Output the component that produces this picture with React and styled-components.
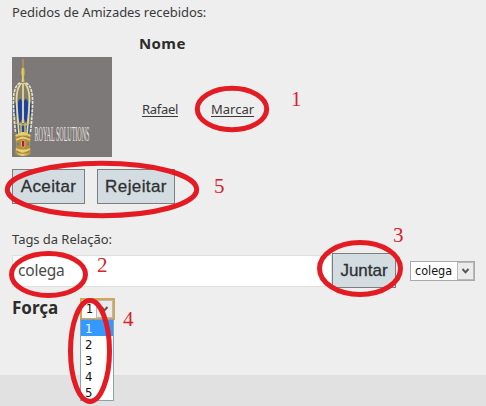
import React from "react";
import styled, { createGlobalStyle } from "styled-components";

const Global = createGlobalStyle`
  * { box-sizing: border-box; }
  body { margin: 0; background: #eeeeee; color: #3a3a3a; font-family: "Open Sans", "Noto Sans", sans-serif; }
`;
const Page = styled.div`
  position: relative;
  width: 486px;
  height: 406px;
  overflow: hidden;
  display: flex;
  flex-direction: column;
  background: #eeeeee;
`;
const Content = styled.main`
  height: 375px;
  padding: 2px 0 0 12px;
  display: flex;
  flex-direction: column;
`;
const Label = styled.div`
  height: 20px;
  font: 13px/20px "Noto Sans", sans-serif;
  letter-spacing: -0.05px;
  white-space: nowrap;
`;
const NameHeading = styled.div`
  height: 35px;
  padding: 10px 0 0 127px;
  color: #2c2c2c;
  font: bold 15px/22px "Noto Sans", sans-serif;
  letter-spacing: 0.4px;
`;
const RequestRow = styled.div`
  display: grid;
  grid-template-columns: 130px 69px 60px;
  height: 100px;
`;
const PersonLink = styled.a`
  margin-top: 42px;
  font: 13px/20px "Noto Sans", sans-serif;
  letter-spacing: ${(p) => p.$spacing || 0}px;
  text-decoration: underline;
  text-underline-offset: 2px;
  justify-self: start;
`;
const Logo = styled.svg`
  display: block;
  width: 100px;
  height: 100px;
`;
const Actions = styled.div`
  display: flex;
  gap: 12px;
  margin-top: 12px;
`;
const Button = styled.button`
  width: ${(p) => p.$width}px;
  height: 35px;
  padding: 0;
  border: 1px solid #7b7f82;
  border-radius: 0;
  background: #d3dce1;
  color: #2e3032;
  font: 17px/32px "Liberation Sans", sans-serif;
  -webkit-text-stroke: 0.3px #2e3032;
  letter-spacing: ${(p) => p.$spacing || 0}px;
  flex: none;
`;
const TagLabel = styled(Label)`
  margin-top: 25px;
`;
const TagRow = styled.div`
  display: flex;
  height: 35px;
  margin-top: 4px;
`;
const TagInput = styled.input`
  width: 320px;
  height: 32px;
  margin-top: 2px;
  padding: 0 5px 2px;
  border: 1px solid #e0e0e0;
  border-radius: 0;
  background: #fff;
  color: #4a4a4a;
  font: 15.5px "Noto Sans", sans-serif;
  letter-spacing: -0.2px;
  outline: none;
`;
const SelectBox = styled.div`
  display: flex;
  width: ${(p) => p.$width}px;
  height: ${(p) => p.$height}px;
  border: ${(p) => (p.$open ? "2px solid #d2a754" : "1px solid #a9a9a9")};
  background: #fff;
  color: #111;
  font: 12.5px/18px "DejaVu Sans Condensed", "DejaVu Sans", sans-serif;
  font-stretch: condensed;
`;
const TagSelect = styled(SelectBox)`
  margin: 8px 0 0 14px;
`;
const SelectValue = styled.span`
  flex: 1;
  padding-left: 4px;
`;
const Arrow = styled.span`
  display: grid;
  place-items: center;
  width: 17px;
  border: 1px solid #b9b9b9;
  background: #ebebeb;
`;
const StrengthRow = styled.div`
  display: flex;
  margin-top: 10px;
  height: 22px;
`;
const StrengthLabel = styled.div`
  width: 68px;
  color: #2c2c2c;
  font: bold 17px/20px "Noto Sans", sans-serif;
`;
const StrengthPicker = styled.div`
  position: relative;
`;
const Options = styled.ul`
  position: absolute;
  z-index: 1;
  top: 21px;
  left: 0;
  width: 34px;
  margin: 0;
  padding: 0;
  list-style: none;
  border: 1px solid #8aa3b5;
  background: #fff;
`;
const Option = styled.li`
  height: 16px;
  padding-left: 4px;
  font: 13px/17px "DejaVu Sans Condensed", "DejaVu Sans", sans-serif;
  font-stretch: condensed;
  color: ${(p) => (p.$selected ? "#fff" : "#111")};
  background: ${(p) => (p.$selected ? "#3399ff" : "#fff")};
`;
const Footer = styled.footer`
  flex: 1;
  background: #e1e1e1;
`;
const Annotations = styled.svg`
  position: absolute;
  z-index: 2;
  inset: 0;
  pointer-events: none;
  ellipse { fill: none; stroke: #e41b23; stroke-width: 5; }
  text { fill: #dc2028; font: 21px "Liberation Serif", serif; }
`;

const Chevron = () => (
  <svg width="9" height="8" viewBox="0 0 9 8">
    <path d="M1.5 2 4.5 5.3 7.5 2" fill="none" stroke="#555" strokeWidth="2" />
  </svg>
);

const CompanyLogo = () => (
  <Logo viewBox="0 0 100 100">
    <defs>
      <linearGradient id="gold">
        <stop offset="0" stopColor="#a5883a" />
        <stop offset=".45" stopColor="#ead77e" />
        <stop offset="1" stopColor="#a88534" />
      </linearGradient>
    </defs>
    <rect width="100" height="100" fill="#7e7979" />
    <path d="M11 2v10" stroke="#b7a23e" strokeWidth="1.3" />
    <path d="M9.5 11h3l.7 5-1.2 4 1 6H9l1-6-1.2-4z" fill="url(#gold)" />
    <path d="M11 25C4 26 1 35 1 47c0 12 1 21 2.500 31h15c1.500-10 2.500-19 2.500-31 0-12-3-21-10-22z" fill="#857f65" />
    <path d="M6.500 45Q8 40 9.500 44V62L8 65 6.500 60zM12.500 44Q14 40 15.500 45L15.500 60 14 65 12.500 62z" fill="#1440ae" stroke="#1440ae" strokeWidth=".8" />
    <path d="M2.500 45l1.500 1v14l-1.500-3zM19.500 45l-1.500 1v14l1.500-3zM4 65l4 4v8H5zM10 68h2v8h-2zM18 65l-4 4v8h3z" fill="#244a93" />
    <path d="M9.500 26C4.500 31 4 42 5 52s1 16 2 25M12.500 26c5 5 5.500 16 4.500 26s-1 16-2 25M11 26v40" fill="none" stroke="#e7dba5" strokeWidth="1.700" />
    <path d="M8 26C2 29 1 39 1.500 49S2.500 67 3.500 75M14 26c6 3 7 13 6.500 23S19.500 67 18.500 75" fill="none" stroke="#e4e3d5" strokeWidth="1.600" strokeDasharray="3 1" />
    <path d="M4 66Q11 70 18 66M9 66v10M13 66v10" stroke="#cbbb73" strokeWidth="1.200" fill="none" />
    <path d="M3 78Q11 72 19 78L18 88 19 97Q11 101 3 97L4 88z" fill="url(#gold)" />
    <path d="M4.500 83Q11 79 17.500 83V91Q11 94 4.500 91z" fill="#ae8d44" />
    <path d="M3.500 79Q11 73.500 18.500 79M4 83Q11 79 18 83M4 92Q11 96 18 92" stroke="#ebd175" strokeWidth="1.500" fill="none" />
    <path d="M5 81Q11 77 17 81M5 94.500Q11 98 17 94.500" stroke="#8b6a25" strokeWidth=".8" fill="none" />
    <rect x="9.500" y="83.500" width="3.200" height="6.500" rx="1" fill="#c11620" stroke="#f0cf88" strokeWidth=".7" />
    <path d="M5.500 85l2 2-2 2zM16.500 85l-2 2 2 2z" fill="#398aa3" />
    <text transform="translate(22.500 83.500) scale(.302 1)" fill="#e4e2df" fontFamily="Liberation Serif" fontSize="20">ROYAL SOLUTIONS</text>
  </Logo>
);

const marks = [
  [232, 109, 34.7, 20.7], [102, 189.5, 94.7, 26.2],
  [48.5, 274.5, 37, 21], [360, 268.5, 40.5, 26], [90, 351, 19.5, 50.5],
];
const numbers = [[1, 291, 106], [5, 214, 192.5], [2, 97, 272], [3, 393, 242], [4, 123, 326]];

export default function App() {
  return (
    <>
      <Global />
      <Page>
        <Content>
          <Label>Pedidos de Amizades recebidos:</Label>
          <NameHeading>Nome</NameHeading>
          <RequestRow>
            <CompanyLogo />
            <PersonLink $spacing={-0.3}>Rafael</PersonLink>
            <PersonLink>Marcar</PersonLink>
          </RequestRow>
          <Actions>
            <Button $width={73} $spacing={0.4}>Aceitar</Button>
            <Button $width={78} $spacing={0.4}>Rejeitar</Button>
          </Actions>
          <TagLabel>Tags da Relação:</TagLabel>
          <TagRow>
            <TagInput defaultValue="colega" />
            <Button $width={64}>Juntar</Button>
            <TagSelect $width={65} $height={20}>
              <SelectValue>colega</SelectValue>
              <Arrow><Chevron /></Arrow>
            </TagSelect>
          </TagRow>
          <StrengthRow>
            <StrengthLabel>Força</StrengthLabel>
            <StrengthPicker>
              <SelectBox $open $width={35} $height={22}>
                <SelectValue>1</SelectValue>
                <Arrow><Chevron /></Arrow>
              </SelectBox>
              <Options>
                {[1, 2, 3, 4, 5].map((n) => <Option key={n} $selected={n === 1}>{n}</Option>)}
              </Options>
            </StrengthPicker>
          </StrengthRow>
        </Content>
        <Footer />
        <Annotations width="486" height="406">
          {marks.map(([cx, cy, rx, ry]) => <ellipse key={cx} cx={cx} cy={cy} rx={rx} ry={ry} />)}
          {numbers.map(([n, x, y]) => <text key={n} x={x} y={y}>{n}</text>)}
        </Annotations>
      </Page>
    </>
  );
}
